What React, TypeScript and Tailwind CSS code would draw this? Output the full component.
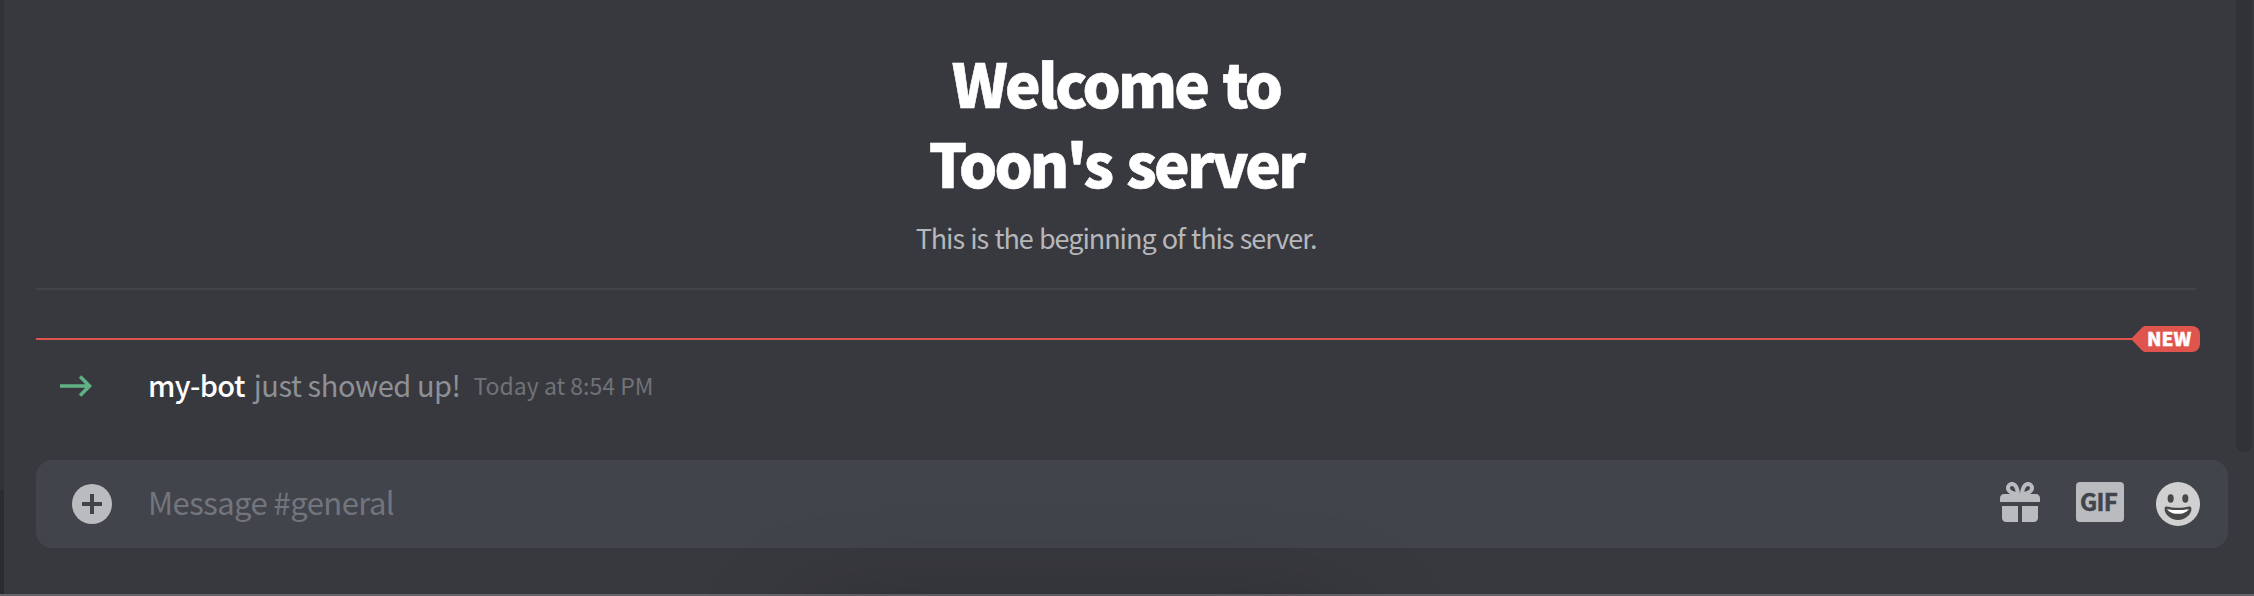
function WelcomeHeader() {
  return (
    <header className="mr-[58px] ml-8 h-[290px] border-b-2 border-[#434448] pt-[42px] text-center">
      <h1 className="text-[60px] leading-[80px] font-black tracking-[-2.8px] text-white [-webkit-text-stroke:0.6px_white] [word-spacing:4px]">
        Welcome to
        <br />
        Toon's server
      </h1>
      <p className="mt-4 text-[27px] leading-10 tracking-[-1.05px] text-[#b6b7bb] [word-spacing:1.200px]">
        This is the beginning of this server.
      </p>
    </header>
  );
}

function NewDivider() {
  return (
    <div className="mt-9 mr-[54px] ml-8 flex h-[26px] items-center">
      <div className="h-[2px] flex-1 bg-[#e0544e]" />
      <svg className="-ml-px h-[26px] w-[14px]" viewBox="0 0 14 26" fill="#e0544e">
        <path d="M14 0C12.6.2 11.6.9 10.6 1.9L0 13l10.6 11.1c1 1 2 1.700 3.4 1.900z" />
      </svg>
      <span className="-ml-px flex h-[26px] w-[56px] justify-start rounded-r-lg bg-[#e0544e] pl-[3px] text-[19px] leading-[24px] font-black text-white [-webkit-text-stroke:0.4px_white]">
        NEW
      </span>
    </div>
  );
}

function JoinMessage() {
  return (
    <div className="mt-2 flex h-12 items-center pl-14">
      <svg className="mt-1 h-8 w-8" viewBox="0 0 18 18" fill="#60b285">
        <path d="m0 8h14.2l-3.6-3.6 1.4-1.4 6 6-6 6-1.400-1.400 3.600-3.600h-14.200z" />
      </svg>
      <div className="ml-14 flex items-baseline text-[29px] leading-[46px] whitespace-pre">
        <span className="font-medium tracking-[-0.6px] text-white">my-bot</span>
        <span className="ml-[9px] tracking-[-0.43px] text-[#8e9096]">just showed up!</span>
        <span className="relative -top-[2px] ml-[13px] text-[23px] leading-none text-[#707277]">Today at 8:54 PM</span>
      </div>
    </div>
  );
}

function GiftIcon() {
  return (
    <svg className="h-12 w-12" viewBox="0 0 24 24" fill="#b9bbbf" fillRule="evenodd">
      <path d="M16.886 7.999H20C21.104 7.999 22 8.896 22 9.999V11.999H2V9.999C2 8.896 2.897 7.999 4 7.999H7.114C6.663 7.764 6.236 7.477 5.879 7.121C4.709 5.951 4.709 4.048 5.879 2.879C7.012 1.746 8.986 1.746 10.121 2.877C11.758 4.514 11.979 7.595 11.998 7.941L11.99 7.999H12.01L12.002 7.941C12.021 7.595 12.242 4.514 13.879 2.877C15.013 1.746 16.987 1.746 18.121 2.879C19.291 4.048 19.291 5.951 18.121 7.121C17.764 7.477 17.337 7.764 16.886 7.999ZM7.293 5.707C6.903 5.316 6.903 4.682 7.293 4.292C7.481 4.103 7.732 4 8 4C8.268 4 8.519 4.103 8.707 4.292C9.297 4.882 9.641 5.94 9.825 6.822C8.945 6.639 7.879 6.293 7.293 5.707ZM14.174 6.824C14.359 5.941 14.702 4.883 15.293 4.293C15.481 4.103 15.732 4 16 4C16.268 4 16.519 4.103 16.706 4.291C17.096 4.682 17.097 5.316 16.707 5.707C16.116 6.298 15.057 6.642 14.174 6.824ZM3 13.999H11V21.999H5C3.897 21.999 3 21.102 3 19.999V13.999ZM13 13.999H21V19.999C21 21.102 20.104 21.999 19 21.999H13V13.999Z" />
    </svg>
  );
}

function EmojiIcon() {
  return (
    <svg className="h-11 w-11" viewBox="0 0 36 36">
      <circle cx="18" cy="18" r="18" fill="#d0d0d0" />
      <g fill="#484848">
        <path d="M18 21c-3.623 0-6.027-.422-9-1-.679-.131-2 0-2 2 0 4 4.595 9 11 9 6.404 0 11-5 11-9 0-2-1.321-2.132-2-2-2.973.578-5.377 1-9 1z" />
        <ellipse cx="12" cy="13.5" rx="2.5" ry="3.5" />
        <ellipse cx="24" cy="13.5" rx="2.5" ry="3.5" />
      </g>
      <path d="M9 22s3 1 9 1 9-1 9-1-2 4-9 4-9-4-9-4z" fill="#fff" />
    </svg>
  );
}

function MessageInput() {
  return (
    <div className="mt-[52px] mr-[26px] ml-8 flex h-[88px] items-start rounded-2xl bg-[#42444b] pr-7 pl-9">
      <svg className="mt-6 h-10 w-10" viewBox="0 0 40 40">
        <circle cx="20" cy="20" r="20" fill="#b9bbbf" />
        <path d="M20 10v20M10 20h20" stroke="#42444b" strokeWidth="4" />
      </svg>
      <span className="ml-9 flex-1 text-[31px] leading-[83px] tracking-[-0.55px] text-[#72757d]">
        Message #general
      </span>
      <div className="mt-[18px]">
        <GiftIcon />
      </div>
      <span className="mt-[22px] ml-8 h-10 w-12 rounded bg-[#b9bbbf] pl-1 text-[24px] leading-[38px] font-bold tracking-[-0.7px] text-[#42444b] [-webkit-text-stroke:0.5px_#42444b]">
        GIF
      </span>
      <div className="mt-[22px] ml-8">
        <EmojiIcon />
      </div>
    </div>
  );
}

export default function App() {
  return (
    <div className="relative flex h-[596px] w-[2254px] flex-col overflow-hidden bg-[#38393e] font-['Noto_Sans_CJK_SC','Noto_Sans',sans-serif]">
      <div className="flex h-[594px]">
        <div className="flex w-1 flex-col">
          <div className="h-[490px] bg-[#323337]" />
          <div className="flex-1 bg-[#2a2b2e]" />
        </div>
        <main className="flex-1">
          <WelcomeHeader />
          <NewDivider />
          <JoinMessage />
          <MessageInput />
        </main>
      </div>
      <div className="h-[2px] bg-[#66636a]" />
      <div className="absolute top-0 right-[2px] h-[452px] w-4 rounded-b-full bg-[#2f3237]" />
      <div className="absolute top-[640px] left-[820px] h-[100px] w-[510px] shadow-[0_0_110px_10px_rgba(0,0,0,0.35)]" />
    </div>
  );
}
